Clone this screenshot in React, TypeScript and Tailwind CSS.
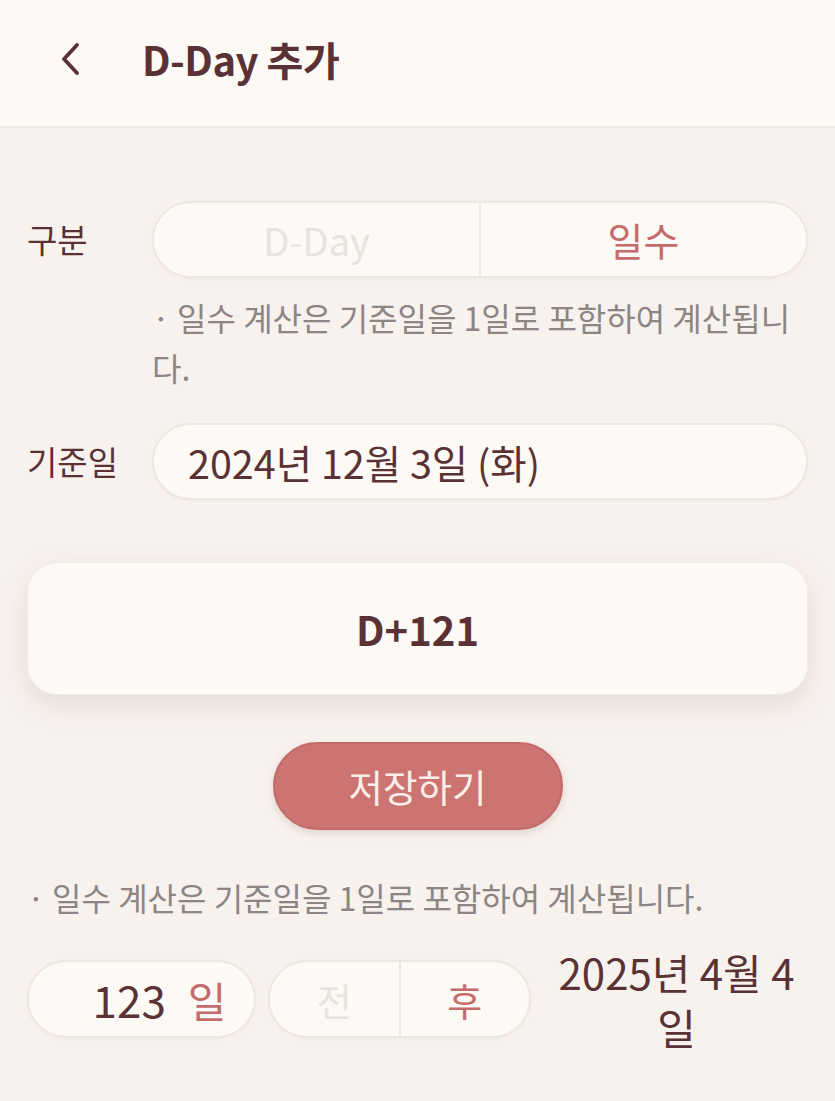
import React from 'react'

const FONT = '"Noto Sans CJK KR", "Noto Sans", sans-serif'

function Chevron() {
  return (
    <svg width="26" height="36" viewBox="0 0 26 36" fill="none">
      <path d="M20 4 L7 18 L20 32" stroke="#5a3235" strokeWidth="3.8" strokeLinecap="round" strokeLinejoin="round" />
    </svg>
  )
}

export default function App() {
  return (
    <div className="min-h-screen bg-[#f8f2ee] text-[#5a3235]" style={{ fontFamily: FONT }}>
      <header className="flex h-[128px] items-center border-b-2 border-[#efe8e3] bg-[#fdf9f5] pb-[8px]">
        <div className="ml-[57px] flex w-[85px] items-center">
          <Chevron />
        </div>
        <h1 className="text-[40px] font-semibold tracking-[-0.5px]">D-Day 추가</h1>
      </header>

      <main className="px-[27px]">
        <div className="mt-[73px] flex items-center">
          <span className="w-[125px] text-[33px]">구분</span>
          <div className="flex h-[77px] flex-1 overflow-hidden rounded-full border-2 border-[#eee7e2] bg-[#fdf9f5] shadow-[0_1px_3px_rgba(90,50,50,0.05)]">
            <button className="flex-1 text-[38px] text-[#e9e3e0]">D-Day</button>
            <div className="w-[2px] bg-[#eee7e2]" />
            <button className="flex-1 text-[39px] text-[#c46c6c]">일수</button>
          </div>
        </div>

        <p className="mt-[14px] pl-[125px] text-[32px] leading-[50px] text-[#8c8584]">
          · 일수 계산은 기준일을 1일로 포함하여 계산됩니다.
        </p>

        <div className="mt-[31px] flex items-center">
          <span className="w-[125px] text-[33px]">기준일</span>
          <div className="flex h-[77px] flex-1 items-center rounded-full border-2 border-[#eee7e2] bg-[#fdf9f5] pl-[34px] text-[39.5px] shadow-[0_1px_3px_rgba(90,50,50,0.05)]">
            2024년 12월 3일 (화)
          </div>
        </div>

        <div className="mt-[62px] flex h-[133px] items-center justify-center rounded-[30px] border border-[#f1ebe6] bg-[#fdf9f5] shadow-[0_10px_28px_rgba(110,70,60,0.13)]">
          <span className="text-[40px] font-bold">D+121</span>
        </div>

        <div className="mt-[47px] flex justify-center">
          <button className="h-[88px] w-[290px] rounded-full border-2 border-[#c26b68] bg-[#cb7471] text-[37.5px] text-[#fcefea] shadow-[0_3px_8px_rgba(120,60,60,0.18)]">
            저장하기
          </button>
        </div>

        <p className="mt-[42px] text-[32px] leading-[50px] text-[#8c8584]">
          · 일수 계산은 기준일을 1일로 포함하여 계산됩니다.
        </p>

        <div className="mt-[22px] flex items-center">
          <div className="flex h-[78px] w-[229px] items-center justify-center gap-[22px] rounded-full border-2 border-[#eee7e2] bg-[#fdf9f5] pl-[36px] shadow-[0_1px_3px_rgba(90,50,50,0.05)]">
            <span className="text-[44px]">123</span>
            <span className="text-[42px] text-[#c46c6c]">일</span>
          </div>
          <div className="ml-[12px] flex h-[78px] w-[263px] overflow-hidden rounded-full border-2 border-[#eee7e2] bg-[#fdf9f5] shadow-[0_1px_3px_rgba(90,50,50,0.05)]">
            <button className="flex-1 text-[38px] text-[#e9e3e0]">전</button>
            <div className="w-[2px] bg-[#eee7e2]" />
            <button className="flex-1 text-[38px] text-[#c46c6c]">후</button>
          </div>
          <div className="ml-[14px] flex-1 text-center text-[42px] leading-[55px]">
            2025년 4월 4일
          </div>
        </div>
      </main>
    </div>
  )
}
